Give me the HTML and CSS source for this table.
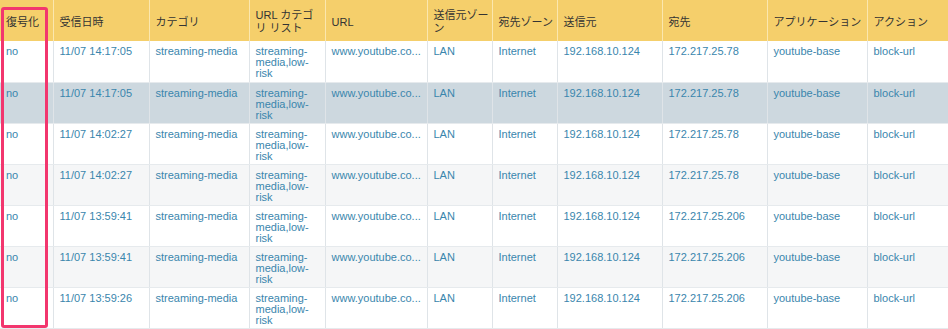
FILE: index.html
```html
<!DOCTYPE html>
<html lang="ja">
<head>
<meta charset="utf-8">
<link rel="stylesheet" href="styles.css">
</head>
<body>
<div class="wrap">
<table class="log">
<colgroup>
<col style="width:53px"><col style="width:96px"><col style="width:100px"><col style="width:76px"><col style="width:102px"><col style="width:65px"><col style="width:65px"><col style="width:105px"><col style="width:105px"><col style="width:100px"><col style="width:81px">
</colgroup>
<thead>
<tr><th>復号化</th><th>受信日時</th><th>カテゴリ</th><th>URL カテゴリ リスト</th><th>URL</th><th>送信元ゾー<br>ン</th><th>宛先ゾーン</th><th>送信元</th><th>宛先</th><th>アプリケーション</th><th>アクション</th></tr>
</thead>
<tbody>
<tr><td>no</td><td>11/07 14:17:05</td><td>streaming-media</td><td>streaming-media,low-risk</td><td class="url">www.youtube.co...</td><td>LAN</td><td>Internet</td><td>192.168.10.124</td><td>172.217.25.78</td><td>youtube-base</td><td>block-url</td></tr>
<tr class="sel"><td>no</td><td>11/07 14:17:05</td><td>streaming-media</td><td>streaming-media,low-risk</td><td class="url">www.youtube.co...</td><td>LAN</td><td>Internet</td><td>192.168.10.124</td><td>172.217.25.78</td><td>youtube-base</td><td>block-url</td></tr>
<tr><td>no</td><td>11/07 14:02:27</td><td>streaming-media</td><td>streaming-media,low-risk</td><td class="url">www.youtube.co...</td><td>LAN</td><td>Internet</td><td>192.168.10.124</td><td>172.217.25.78</td><td>youtube-base</td><td>block-url</td></tr>
<tr class="alt"><td>no</td><td>11/07 14:02:27</td><td>streaming-media</td><td>streaming-media,low-risk</td><td class="url">www.youtube.co...</td><td>LAN</td><td>Internet</td><td>192.168.10.124</td><td>172.217.25.78</td><td>youtube-base</td><td>block-url</td></tr>
<tr><td>no</td><td>11/07 13:59:41</td><td>streaming-media</td><td>streaming-media,low-risk</td><td class="url">www.youtube.co...</td><td>LAN</td><td>Internet</td><td>192.168.10.124</td><td>172.217.25.206</td><td>youtube-base</td><td>block-url</td></tr>
<tr class="alt"><td>no</td><td>11/07 13:59:41</td><td>streaming-media</td><td>streaming-media,low-risk</td><td class="url">www.youtube.co...</td><td>LAN</td><td>Internet</td><td>192.168.10.124</td><td>172.217.25.206</td><td>youtube-base</td><td>block-url</td></tr>
<tr><td>no</td><td>11/07 13:59:26</td><td>streaming-media</td><td>streaming-media,low-risk</td><td class="url">www.youtube.co...</td><td>LAN</td><td>Internet</td><td>192.168.10.124</td><td>172.217.25.206</td><td>youtube-base</td><td>block-url</td></tr>
</tbody>
</table>
<div class="highlight"></div>
</div>
</body>
</html>
```
FILE: styles.css
```css
html, body {
  margin: 0;
  padding: 0;
  background: #ffffff;
}
body {
  font-family: "Liberation Sans", "Noto Sans CJK JP", sans-serif;
  font-size: 11px;
  overflow: hidden;
}
.wrap {
  position: relative;
  width: 948px;
}
.log {
  width: 948px;
  table-layout: fixed;
  border-collapse: collapse;
}
.log th {
  background: #f5cf6b;
  color: #333333;
  font-weight: normal;
  text-align: left;
  vertical-align: middle;
  height: 41px;
  box-sizing: border-box;
  padding: 3px 2px 0 6px;
  line-height: 13px;
  border-left: 1px solid #fbe7ae;
}
.log th:first-child {
  border-left: none;
}
.log td {
  color: #3a86ad;
  vertical-align: top;
  height: 41px;
  box-sizing: border-box;
  padding: 5px 4px 0 6px;
  line-height: 11px;
  border-left: 1px solid #dfe4e8;
  border-bottom: 1px solid #e6eaed;
  overflow: hidden;
}
.log td:first-child {
  border-left: none;
}
.log td.url {
  white-space: nowrap;
}
.log tr.sel td {
  background: #cdd8df;
}
.log tr.alt td {
  background: #f5f6f7;
}
.highlight {
  position: absolute;
  left: 1px;
  top: 7px;
  width: 47px;
  height: 321px;
  box-sizing: border-box;
  border: 3px solid #f2366e;
  border-radius: 3px;
}
```
